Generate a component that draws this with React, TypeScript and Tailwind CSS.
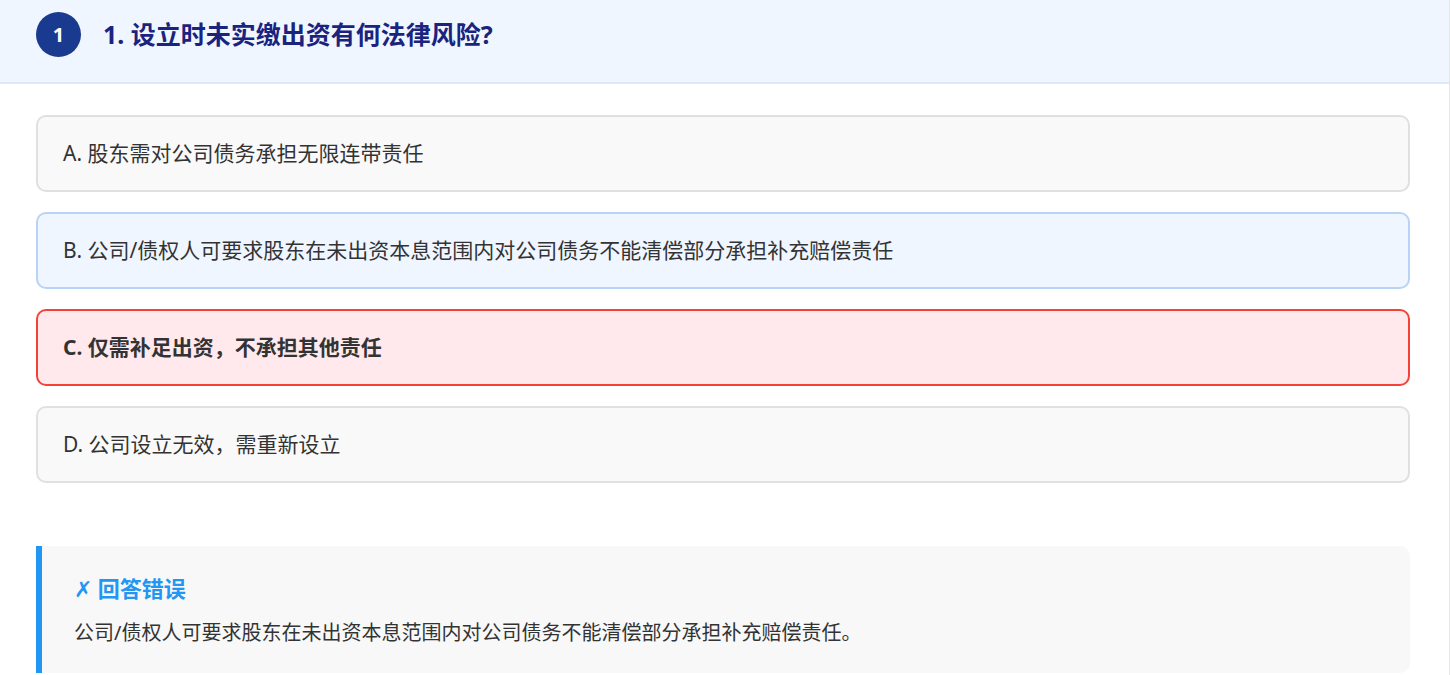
import React from 'react';

const options = [
  { key: 'A', text: '股东需对公司债务承担无限连带责任', state: 'normal' },
  { key: 'B', text: '公司/债权人可要求股东在未出资本息范围内对公司债务不能清偿部分承担补充赔偿责任', state: 'correct' },
  { key: 'C', text: '仅需补足出资，不承担其他责任', state: 'wrong' },
  { key: 'D', text: '公司设立无效，需重新设立', state: 'normal' },
];

const optionClass: Record<string, string> = {
  normal: 'bg-[#f9f9f9] border-[#e0e0e0] font-normal',
  correct: 'bg-[#f0f6ff] border-[#b9d3f7] font-normal',
  wrong: 'bg-[#ffe9ec] border-[#f44336] font-bold',
};

export default function App() {
  return (
    <div
      className="w-[1450px] min-h-[675px] bg-white border-r border-[#e6e6e6]"
      style={{ fontFamily: '"Noto Sans", "Noto Sans CJK SC", sans-serif' }}
    >
      {/* Header */}
      <div className="h-[84px] bg-[#eff6ff] border-b-2 border-[#dde9fb] flex items-start pt-[12px] px-[36px]">
        <div className="w-[45px] h-[45px] rounded-full bg-[#1a3a8f] text-white flex items-center justify-center text-[20px] font-bold">
          1
        </div>
        <h2 className="ml-[22px] text-[25px] leading-[44px] font-bold text-[#1a237e]">
          1. 设立时未实缴出资有何法律风险?
        </h2>
      </div>

      {/* Options */}
      <div className="pl-[36px] pr-[39px] pt-[31px] flex flex-col gap-[20px]">
        {options.map((o) => (
          <div
            key={o.key}
            className={`h-[77px] border-2 rounded-[10px] px-[25px] flex items-center text-[21px] text-[#333] ${optionClass[o.state]}`}
          >
            {o.key}. {o.text}
          </div>
        ))}
      </div>

      {/* Feedback */}
      <div className="ml-[36px] mr-[39px] mt-[63px] bg-[#f8f8f8] border-l-[6px] border-[#2196f3] rounded-r-[10px] pl-[32px] pr-[30px] pt-[26px] pb-[24px]">
        <div className="text-[22px] leading-[33px] font-bold text-[#2196f3] mb-[12px]">
          <span className="font-normal">✗</span> 回答错误
        </div>
        <p className="text-[20px] leading-[32px] text-[#333]">
          公司/债权人可要求股东在未出资本息范围内对公司债务不能清偿部分承担补充赔偿责任。
        </p>
      </div>
    </div>
  );
}
